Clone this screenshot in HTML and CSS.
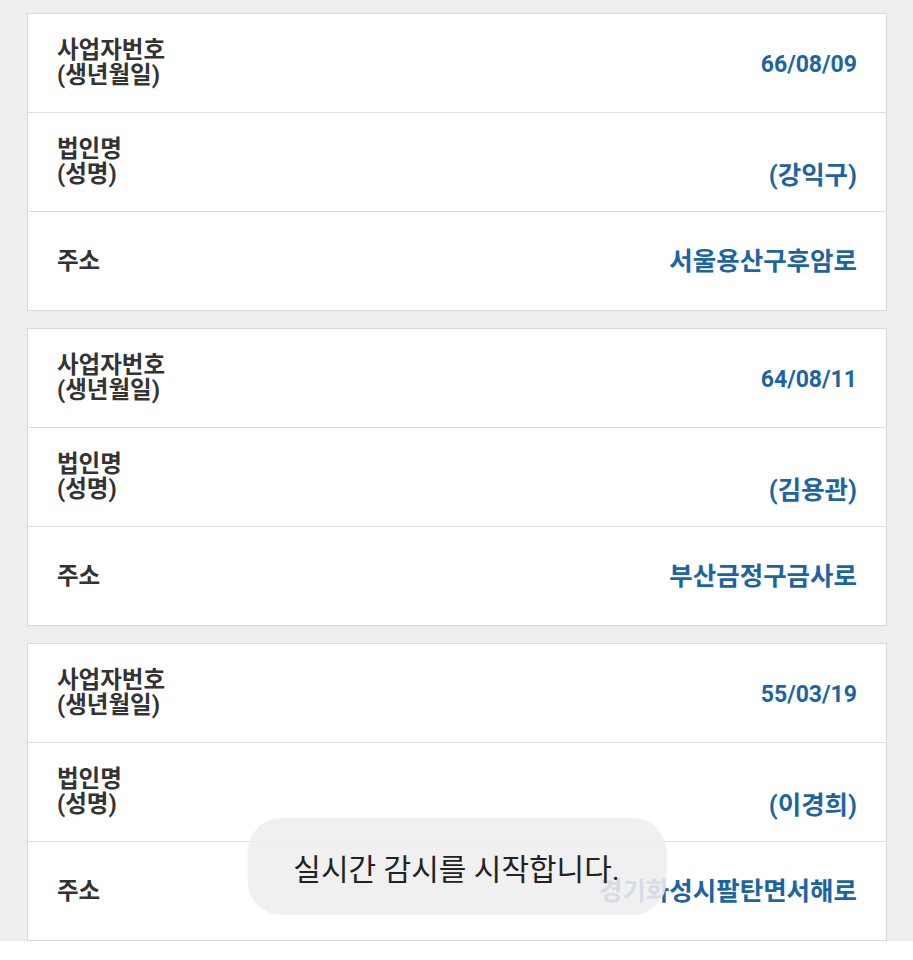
FILE: index.html
```html
<!DOCTYPE html>
<html lang="ko">
<head>
<meta charset="utf-8">
<title>조회 결과</title>
<link rel="stylesheet" href="styles.css">
</head>
<body>
<div class="page">
  <div class="card">
    <div class="row">
      <div class="label">사업자번호<br>(생년월일)</div>
      <div class="value date">66/08/09</div>
    </div>
    <div class="row">
      <div class="label">법인명<br>(성명)</div>
      <div class="value"><br>(강익구)</div>
    </div>
    <div class="row">
      <div class="label">주소</div>
      <div class="value">서울용산구후암로</div>
    </div>
  </div>
  <div class="card">
    <div class="row">
      <div class="label">사업자번호<br>(생년월일)</div>
      <div class="value date">64/08/11</div>
    </div>
    <div class="row">
      <div class="label">법인명<br>(성명)</div>
      <div class="value"><br>(김용관)</div>
    </div>
    <div class="row">
      <div class="label">주소</div>
      <div class="value">부산금정구금사로</div>
    </div>
  </div>
  <div class="card">
    <div class="row">
      <div class="label">사업자번호<br>(생년월일)</div>
      <div class="value date">55/03/19</div>
    </div>
    <div class="row">
      <div class="label">법인명<br>(성명)</div>
      <div class="value"><br>(이경희)</div>
    </div>
    <div class="row">
      <div class="label">주소</div>
      <div class="value">경기화성시팔탄면서해로</div>
    </div>
  </div>
</div>
<div class="toast">실시간 감시를 시작합니다.</div>
</body>
</html>
```
FILE: styles.css
```css
html, body {
  margin: 0;
  padding: 0;
  background: #ffffff;
}
body {
  font-family: Roboto, "Noto Sans CJK KR", sans-serif;
  position: relative;
  min-height: 960px;
}
.page {
  background: #eeeeee;
  padding: 13px 26px 0 27px;
  display: flex;
  flex-direction: column;
  gap: 17px;
}
.card {
  background: #ffffff;
  border: 1px solid #dadada;
}
.row {
  height: 98px;
  display: flex;
  align-items: center;
  justify-content: space-between;
  padding: 0 29px;
  border-top: 1px solid #dedede;
}
.row:first-child {
  border-top: none;
}
.label {
  font-size: 23.5px;
  line-height: 25px;
  font-weight: 700;
  color: #333333;
}
.value {
  font-size: 25.5px;
  line-height: 26px;
  font-weight: 700;
  color: #1c64a3;
  text-align: right;
}
.value.date {
  font-size: 23px;
  padding-top: 3px;
}
.toast {
  position: absolute;
  top: 818px;
  left: 50%;
  transform: translateX(-50%);
  width: 419px;
  height: 97px;
  border-radius: 34px;
  background: rgba(238, 238, 238, 0.88);
  display: flex;
  align-items: center;
  justify-content: center;
  font-size: 30px;
  color: #222222;
  white-space: nowrap;
}
```
